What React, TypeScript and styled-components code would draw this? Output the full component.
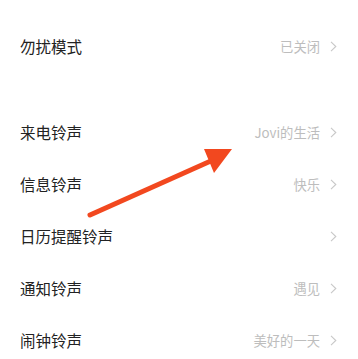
import styled, { createGlobalStyle } from 'styled-components';

const Global = createGlobalStyle`
  html, body {
    margin: 0;
    padding: 0;
    background: #fff;
  }
  body {
    font-family: "Noto Sans CJK SC", "Noto Sans", sans-serif;
  }
`;

const Page = styled.div`
  position: relative;
  width: 358px;
  height: 359px;
  overflow: hidden;
  padding-top: 20px;
  box-sizing: border-box;
`;

const Group = styled.div<{ $gap?: number }>`
  display: flex;
  flex-direction: column;
  margin-bottom: ${(p) => p.$gap ?? 0}px;
`;

const Row = styled.div`
  height: 52px;
  display: flex;
  align-items: center;
  justify-content: space-between;
  padding: 0 21px 0 20px;
`;

const Label = styled.span`
  font-size: 15.5px;
  color: #222;
`;

const Right = styled.span`
  display: flex;
  align-items: center;
  gap: 10px;
`;

const Value = styled.span`
  font-size: 13.3px;
  color: #bdbdbd;
`;

const Chevron = () => (
  <svg width="7" height="11" viewBox="0 0 7 11">
    <path d="M1 0.8 L5.8 5.5 L1 10.2" fill="none" stroke="#c8c8c8" strokeWidth="1.1" />
  </svg>
);

const Arrow = styled.svg`
  position: absolute;
  left: 0;
  top: 0;
  pointer-events: none;
`;

const Item = ({ label, value }: { label: string; value?: string }) => (
  <Row>
    <Label>{label}</Label>
    <Right>
      {value && <Value>{value}</Value>}
      <Chevron />
    </Right>
  </Row>
);

export default function App() {
  return (
    <Page>
      <Global />
      <Group $gap={34}>
        <Item label="勿扰模式" value="已关闭" />
      </Group>
      <Group>
        <Item label="来电铃声" value="Jovi的生活" />
        <Item label="信息铃声" value="快乐" />
        <Item label="日历提醒铃声" />
        <Item label="通知铃声" value="遇见" />
        <Item label="闹钟铃声" value="美好的一天" />
      </Group>
      <Arrow width="358" height="359" viewBox="0 0 358 359">
        <line x1="90" y1="215" x2="213" y2="160" stroke="#f2481f" strokeWidth="5" strokeLinecap="round" />
        <polygon points="204,149 232,149 214,173" fill="#f2481f" />
      </Arrow>
    </Page>
  );
}
